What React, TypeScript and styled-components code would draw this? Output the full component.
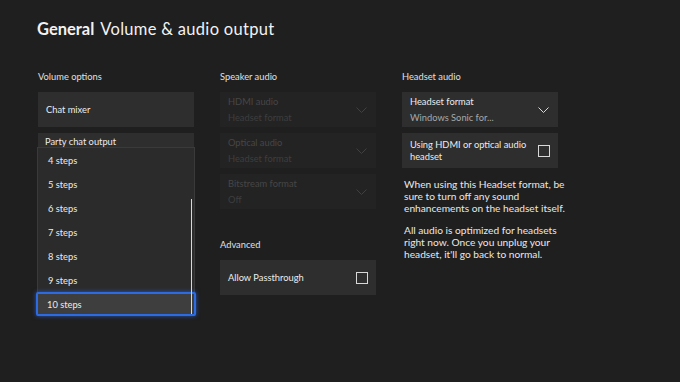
import styled, { createGlobalStyle } from 'styled-components';
import { Fragment } from 'react';

const steps = ['4 steps', '5 steps', '6 steps', '7 steps', '8 steps', '9 steps', '10 steps'];

const Chevron = ({ dim }: { dim?: boolean }) => (
    <svg width="11" height="6" viewBox="0 0 11 6">
        <path d="M0.5 0.5 L5.5 5.5 L10.5 0.5" fill="none" stroke={dim ? '#404040' : '#d8d8d8'} strokeWidth="1" />
    </svg>
);

const App = () => {
    return (
    <Fragment>
        <GlobalStyle />
        <Page>
            <Title>
                <b>General</b> Volume &amp; audio output
            </Title>
            <Columns>
                <Column>
                    <Label>Volume options</Label>
                    <Tile>
                        <TileText>Chat mixer</TileText>
                    </Tile>
                    <MenuHolder>
                        <Tile top>
                            <TileText>Party chat output</TileText>
                        </Tile>
                        <Menu>
                            {steps.map(s => (
                                <MenuItem key={s} selected={s === '10 steps'}>{s}</MenuItem>
                            ))}
                            <ScrollBar />
                        </Menu>
                    </MenuHolder>
                </Column>

                <Column>
                    <Label>Speaker audio</Label>
                    <Tile disabled>
                        <TwoLine>
                            <TileText disabled>HDMI audio</TileText>
                            <SubText disabled>Headset format</SubText>
                        </TwoLine>
                        <Chevron dim />
                    </Tile>
                    <Tile disabled>
                        <TwoLine>
                            <TileText disabled>Optical audio</TileText>
                            <SubText disabled>Headset format</SubText>
                        </TwoLine>
                        <Chevron dim />
                    </Tile>
                    <Tile disabled>
                        <TwoLine>
                            <TileText disabled>Bitstream format</TileText>
                            <SubText disabled>Off</SubText>
                        </TwoLine>
                        <Chevron dim />
                    </Tile>
                    <Label spaced>Advanced</Label>
                    <Tile>
                        <TileText>Allow Passthrough</TileText>
                        <Check />
                    </Tile>
                </Column>

                <Column>
                    <Label>Headset audio</Label>
                    <Tile>
                        <TwoLine>
                            <TileText>Headset format</TileText>
                            <SubText>Windows Sonic for...</SubText>
                        </TwoLine>
                        <Chevron />
                    </Tile>
                    <Tile>
                        <TileText wrap>Using HDMI or optical audio headset</TileText>
                        <Check />
                    </Tile>
                    <Note>
                        When using this Headset format, be sure to turn off any sound enhancements on the headset itself.
                    </Note>
                    <Note>
                        All audio is optimized for headsets right now. Once you unplug your headset, it'll go back to normal.
                    </Note>
                </Column>
            </Columns>
        </Page>
    </Fragment>
    );
};

const GlobalStyle = createGlobalStyle`
    * {
        padding: 0;
        margin: 0;
        box-sizing: border-box;
    }

    body {
        background-color: #1f1f1f;
        color: #e8e8e8;
        font-family: Lato, "Open Sans", sans-serif;
        width: 680px;
        height: 382px;
        overflow: hidden;
    }
`;

const Page = styled.div`
    padding: 19px 0 0 37px;
`;

const Title = styled.h1`
    font-size: 16.5px;
    font-weight: 400;
    line-height: 20px;
    color: #f2f2f2;
    letter-spacing: 0.3px;

    b {
        font-weight: 700;
        letter-spacing: 0;
        margin-right: 2px;
    }
`;

const Columns = styled.div`
    display: grid;
    grid-template-columns: repeat(3, 156px);
    column-gap: 26px;
    margin-top: 31px;
    padding-left: 1px;
`;

const Column = styled.div`
    display: flex;
    flex-direction: column;
    gap: 6px;
`;

const Label = styled.div<{ spaced?: boolean }>`
    font-size: 9.3px;
    line-height: 14px;
    color: #e0e0e0;
    margin-bottom: 2px;
    margin-top: ${p => (p.spaced ? '23px' : '0')};
`;

const Tile = styled.div<{ disabled?: boolean; top?: boolean }>`
    height: 35px;
    background: ${p => (p.disabled ? '#232323' : '#2e2e2e')};
    display: flex;
    align-items: ${p => (p.top ? 'flex-start' : 'center')};
    justify-content: space-between;
    padding: ${p => (p.top ? '3px 9px 0 7px' : '0 8px 0 8px')};

    svg {
        flex-shrink: 0;
        margin-right: 1px;
    }
`;

const TwoLine = styled.div`
    display: flex;
    flex-direction: column;
    gap: 4px;
`;

const TileText = styled.div<{ disabled?: boolean; wrap?: boolean }>`
    font-size: 9.3px;
    line-height: 12px;
    color: ${p => (p.disabled ? '#464646' : '#ececec')};
    width: ${p => (p.wrap ? '124px' : 'auto')};
    flex-shrink: 0;
`;

const SubText = styled.div<{ disabled?: boolean }>`
    font-size: 9.3px;
    line-height: 12px;
    color: ${p => (p.disabled ? '#3e3e3e' : '#a8a8a8')};
`;

const Check = styled.div`
    width: 12px;
    height: 12px;
    border: 1px solid #d8d8d8;
    flex-shrink: 0;
`;

const MenuHolder = styled.div`
    position: relative;
`;

const Menu = styled.div`
    position: absolute;
    left: -1px;
    right: -1px;
    top: 14px;
    background: #2b2b2b;
    border: 1px solid #3a3a3a;
    border-bottom: none;
    z-index: 2;
`;

const MenuItem = styled.div<{ selected?: boolean }>`
    height: 24px;
    display: flex;
    align-items: center;
    padding-left: ${p => (p.selected ? '9px' : '10px')};
    font-size: 9.3px;
    color: #ececec;
    background: ${p => (p.selected ? '#3e3e3e' : 'transparent')};
    border: ${p => (p.selected ? '2px solid #2d6be3' : 'none')};
    border-radius: ${p => (p.selected ? '2px' : '0')};
    box-shadow: ${p => (p.selected ? '0 0 4px rgba(50, 110, 240, 0.7)' : 'none')};
    margin: ${p => (p.selected ? '0 -2px' : '0')};
`;

const ScrollBar = styled.div`
    position: absolute;
    right: 2px;
    top: 51px;
    bottom: 2px;
    width: 1.5px;
    background: #d8d8d8;
    z-index: 3;
`;

const Note = styled.p`
    font-size: 10.2px;
    line-height: 12px;
    color: #e8e8e8;
    width: 168px;
    padding: 4px 0 0 2px;
`;

export default App;
